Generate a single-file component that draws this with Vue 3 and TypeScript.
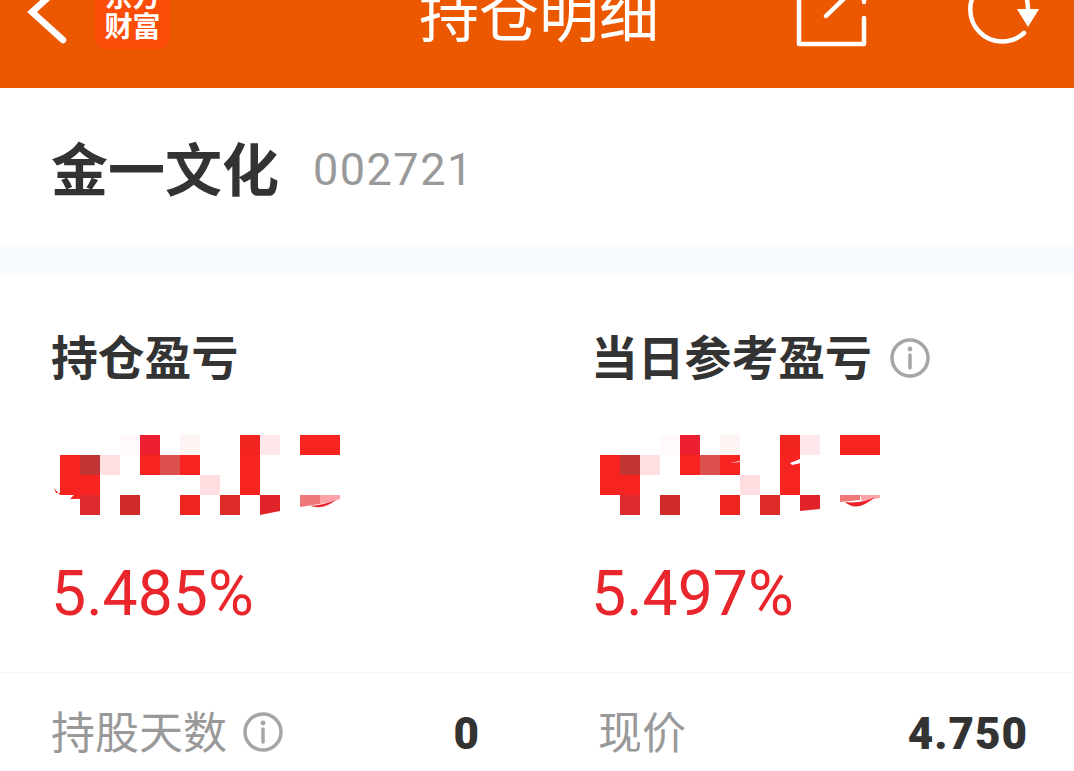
<template>
  <div class="page">
    <header class="top-bar">
      <svg class="back-icon" viewBox="0 0 44 88" width="44" height="88">
        <path d="M38 -16 L7 12 L38 40" />
      </svg>
      <div class="logo">
        <span>东方</span>
        <span>财富</span>
      </div>
      <h1 class="title">持仓明细</h1>
      <svg class="share-icon" viewBox="0 0 76 88" width="76" height="88">
        <path d="M4 -10 V44 H69 V18" />
        <path d="M31 16 L58 -10" />
        <path d="M69 -4 V2" />
      </svg>
      <svg class="refresh-icon" viewBox="0 0 84 88" width="84" height="88">
        <path d="M64 33 A32 32 0 1 1 64 -14" />
        <path d="M66 -4 Q68 2 68 10" />
        <path class="solid" d="M57 9 H79 L68 27 Z" />
      </svg>
    </header>

    <section class="stock">
      <span class="stock-name">金一文化</span>
      <span class="stock-code">002721</span>
    </section>

    <div class="band"></div>

    <section class="profit">
      <div v-for="item in profits" :key="item.label" class="profit-col">
        <div class="profit-label">
          {{ item.label }}
          <svg v-if="item.tip" class="info" viewBox="0 0 40 40" width="40" height="40">
            <circle cx="20" cy="20" r="18" />
            <path d="M20 17 V30" />
            <circle class="dot" cx="20" cy="11" r="2.4" />
          </svg>
        </div>
        <svg class="mosaic" viewBox="0 0 290 84" width="290" height="84">
          <rect
            v-for="(c, i) in cells"
            :key="i"
            :x="c[0] * 20"
            :y="c[1] * 20"
            width="20"
            height="20"
            :fill="c[2]"
          />
          <path v-for="s in item.smears" :key="s.d" :d="s.d" :fill="s.fill" />
        </svg>
        <div class="percent">{{ item.percent }}</div>
      </div>
    </section>

    <section class="detail">
      <div class="detail-row">
        <span class="detail-label">
          持股天数
          <svg class="info" viewBox="0 0 40 40" width="40" height="40">
            <circle cx="20" cy="20" r="18" />
            <path d="M20 17 V30" />
            <circle class="dot" cx="20" cy="11" r="2.4" />
          </svg>
        </span>
        <span class="detail-value">0</span>
      </div>
      <div class="detail-row">
        <span class="detail-label">现价</span>
        <span class="detail-value">4.750</span>
      </div>
    </section>
  </div>
</template>

<script setup lang="ts">
type Cell = [number, number, string]

interface Smear {
  d: string
  fill: string
}

interface Profit {
  label: string
  tip: boolean
  percent: string
  smears: Smear[]
}

const RED = '#f62321'

// blurred amount, one entry per mosaic block: column, row, colour
const cells: Cell[] = [
  [3, 0, '#fff9fc'],
  [4, 0, '#ec2030'],
  [6, 0, '#fff4f4'],
  [9, 0, '#f1241f'],
  [10, 0, '#ffe8ec'],
  [12, 0, RED],
  [13, 0, RED],
  [0, 1, RED],
  [1, 1, '#c23535'],
  [2, 1, '#ffdfe0'],
  [4, 1, RED],
  [5, 1, '#dd5050'],
  [6, 1, RED],
  [9, 1, RED],
  [0, 2, RED],
  [1, 2, RED],
  [7, 2, '#ffdde0'],
  [9, 2, RED],
  [1, 3, '#dd2a2e'],
  [3, 3, '#cf2b28'],
  [6, 3, '#ee2420'],
  [8, 3, '#dc2b28']
]

const profits: Profit[] = [
  {
    label: '持仓盈亏',
    tip: false,
    percent: '5.485%',
    smears: [
      { d: 'M-6 53 L-4 58 H0 V40 H20 V64 H10 L14 60 H0 Z', fill: RED },
      { d: 'M200 60 H220 V76 L200 80 Z', fill: '#e02429' },
      { d: 'M240 60 H260 V69 L240 72 Z', fill: '#ef7878' },
      { d: 'M260 60 H280 V64 Q272 67 260 69 Z', fill: '#ffa3a8' },
      { d: 'M250 71 Q264 75 276 65 Q264 70 250 71 Z', fill: '#e8222a' }
    ]
  },
  {
    label: '当日参考盈亏',
    tip: true,
    percent: '5.497%',
    smears: [
      { d: 'M200 60 H220 V74 L200 76 Z', fill: '#e02429' },
      { d: 'M240 60 H260 V65 L240 67 Z', fill: '#ef7878' },
      { d: 'M260 60 H280 V63 L262 66 Z', fill: '#ffa3a8' },
      { d: 'M245 67 Q257 78 275 62 Q262 69 245 67 Z', fill: '#e8222a' },
      { d: 'M130 28 L160 22 V26 Q146 26 130 28 Z', fill: '#ffffff' },
      { d: 'M190 28 L200 24 L210 23 V26 L192 30 Z', fill: '#ffffff' }
    ]
  }
]
</script>

<style>
html,
body {
  margin: 0;
  background: #fff;
}
</style>

<style scoped>
.page {
  width: 1074px;
  height: 771px;
  overflow: hidden;
  background: #fff;
  font-family: "Noto Sans CJK SC", Roboto, sans-serif;
}

.top-bar {
  display: flex;
  align-items: flex-start;
  height: 88px;
  background: #ec5800;
  color: #fff;
  overflow: hidden;
}

.top-bar svg {
  flex: none;
  fill: none;
  stroke: #fff;
  stroke-width: 5;
  overflow: visible;
}

.back-icon {
  margin-left: 25px;
  stroke-width: 6.5 !important;
  stroke-linecap: round;
}

.logo {
  display: flex;
  flex-direction: column;
  align-items: center;
  justify-content: flex-end;
  flex: none;
  width: 75px;
  height: 49px;
  margin-left: 26px;
  padding-bottom: 9px;
  box-sizing: border-box;
  background: #fb4c08;
  border-radius: 0 0 12px 12px;
  font-size: 28px;
  font-weight: 700;
  line-height: 30px;
  overflow: hidden;
}

.logo span {
  flex: none;
}

.title {
  flex: none;
  margin: -19px 0 0 249px;
  font-size: 60px;
  font-weight: 400;
  line-height: 60px;
  white-space: nowrap;
}

.share-icon {
  margin-left: 136px;
  stroke-linecap: round;
  stroke-linejoin: round;
  stroke-width: 4.5 !important;
}

.refresh-icon {
  margin-left: 89px;
  stroke-width: 4.5 !important;
  stroke-linecap: round;
}

.refresh-icon .solid {
  fill: #fff;
  stroke: none;
}

.stock {
  display: flex;
  align-items: center;
  gap: 34px;
  height: 159px;
  padding-left: 51px;
}

.stock-name {
  margin-top: -4px;
  font-size: 57px;
  font-weight: 700;
  color: #333;
}

.stock-code {
  margin-top: 4px;
  font-family: Roboto, sans-serif;
  font-size: 45px;
  letter-spacing: 1.5px;
  color: #999;
}

.band {
  height: 26px;
  background: #f7fafe;
}

.profit {
  display: grid;
  grid-template-columns: 540px 1fr;
  height: 400px;
  padding-left: 50px;
  border-bottom: 1px solid #f8f8f8;
  box-sizing: border-box;
}

.profit-col {
  display: flex;
  flex-direction: column;
  align-items: flex-start;
  padding-top: 51px;
}

.profit-label {
  display: flex;
  align-items: center;
  gap: 18px;
  height: 60px;
  margin-left: 1px;
  font-size: 46.8px;
  font-weight: 700;
  color: #333;
  white-space: nowrap;
}

.profit-label .info {
  margin-top: 8px;
}

.info {
  flex: none;
  fill: none;
  stroke: #a6a6a6;
  stroke-width: 3.5;
  stroke-linecap: round;
}

.info .dot {
  fill: #a6a6a6;
  stroke: none;
}

.mosaic {
  display: block;
  margin: 51px 0 0 10px;
  overflow: visible;
}

.percent {
  margin: 40px 0 0 1px;
  font-family: Roboto, sans-serif;
  font-size: 62.5px;
  line-height: 70px;
  color: #e8262c;
}

.detail {
  display: grid;
  grid-template-columns: 429px 430px;
  column-gap: 118px;
  padding: 27px 0 0 51px;
}

.detail-row {
  display: flex;
  align-items: center;
  justify-content: space-between;
  height: 60px;
}

.detail-label {
  display: flex;
  align-items: center;
  gap: 16px;
  font-size: 44px;
  color: #999;
}

.detail-label .info {
  margin-top: 4px;
}

.detail-value {
  margin-top: 8px;
  font-family: Roboto, sans-serif;
  font-size: 44px;
  font-weight: 900;
  letter-spacing: 1px;
  color: #333;
}
</style>
